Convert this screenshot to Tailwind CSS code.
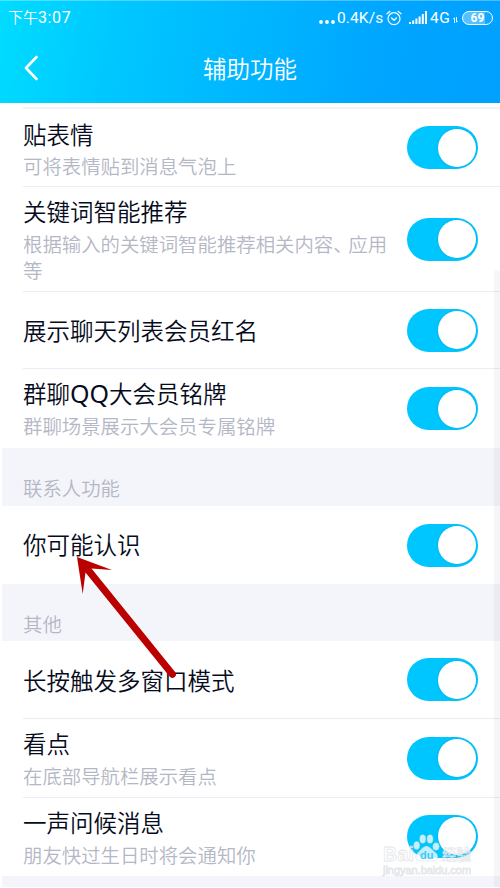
<!DOCTYPE html>
<html lang="zh-CN">
<head>
<meta charset="utf-8">
<title>辅助功能</title>
<script src="https://cdn.jsdelivr.net/npm/@tailwindcss/browser@4"></script>
</head>
<body class="bg-white">
<div class="relative flex h-[888px] w-[500px] flex-col overflow-hidden bg-white font-['Noto_Sans_CJK_SC',sans-serif] font-[350] text-[#060b20]">
  <header class="h-[103px] shrink-0 border-t border-white/30 bg-linear-[100deg,#00dcff_0%,#00c6ff_25%,#00b6ff_50%,#00a6ff_75%,#00a0ff_100%] text-white">
    <div class="flex h-[33px] items-center justify-between pr-[7px] pl-2 text-[15px] leading-5">
      <span class="whitespace-nowrap">下午<span class="font-['Roboto',sans-serif] text-[16px] font-normal tracking-[0.6px]">3:07</span></span>
      <div class="flex items-center font-['Roboto',sans-serif] font-normal">
        <svg class="mt-[8px] mr-[2px]" width="16" height="4" fill="#fff"><circle cx="2" cy="2" r="1.9"/><circle cx="8" cy="2" r="1.9"/><circle cx="14" cy="2" r="1.9"/></svg>
        <span class="w-[46px] text-[15.5px] tracking-[0.1px] whitespace-nowrap">0.4K/s</span>
        <svg class="ml-[3px]" width="16" height="16" viewBox="0 0 16 16" fill="none" stroke="#fff" stroke-width="1.2" stroke-linecap="round" stroke-linejoin="round"><circle cx="8" cy="8.700" r="6"/><path d="M1 3.800L4 1.300M15 3.800L12 1.300M5.600 8L8 10.300L10.500 8"/></svg>
        <svg class="ml-[7px]" width="18" height="13" viewBox="0 0 18 13" fill="#fff"><path d="M0 11h2v2H0zM3.200 9.500h2V13h-2zM6.400 7.500h2V13h-2zM9.600 5.500h2V13h-2zM12.800 3h2v10h-2zM16 0h2v13h-2z"/></svg>
        <span class="ml-[3px] w-[22px] text-[15.5px] tracking-[0.5px] whitespace-nowrap">4G</span>
        <svg class="mt-[5px] ml-px" width="5" height="6" viewBox="0 0 5 6" fill="none" stroke="#fff" stroke-width=".9"><path d="M1.500 6V.8L.2 2.200M3.500 0v5.200L4.800 3.800"/></svg>
        <div class="ml-[4px] flex h-[14px] w-[31px] items-center justify-center rounded-full border-[1.5px] border-white bg-linear-[90deg,#ffffff55_75%,#ffffff11_75%] text-[12px] leading-none font-bold">69</div>
      </div>
    </div>
    <div class="flex h-[67px] items-center pl-[24px]">
      <svg width="14" height="26" viewBox="0 0 14 26" fill="none" stroke="#fff" stroke-width="2.600" stroke-linecap="round" stroke-linejoin="round"><path d="M12.500 2L2 13L12.500 24"/></svg>
      <h1 class="ml-[165px] text-[23.5px] leading-[34px] whitespace-nowrap">辅助功能</h1>
    </div>
  </header>

  <main class="flex shrink-0 flex-col pt-[4px]">
    <section class="ml-[23px] flex h-[79px] shrink-0 items-center border-t-2 border-[#f3f3f9] pr-[22px]">
      <div class="w-[384px]"><h2 class="text-[23.5px] leading-[34px]">贴表情</h2><p class="mt-[2px] text-[19.4px] leading-[26px] text-[#b4b7c5]">可将表情贴到消息气泡上</p></div>
      <div class="flex h-[43px] w-[71px] shrink-0 items-center justify-end rounded-full bg-[#00c6ff] pr-[2.5px]"><span class="size-[38px] rounded-full bg-white shadow-[0_0_3px_#0060a044]"></span></div>
    </section>
    <section class="ml-[23px] flex h-[105px] shrink-0 items-center border-t border-[#ebecf3] pr-[22px]">
      <div class="w-[384px]"><h2 class="-mt-px text-[23.5px] leading-[34px]">关键词智能推荐</h2><p class="mt-[3px] w-[370px] text-[19.4px] leading-[26px] text-[#b4b7c5]">根据输入的关键词智能推荐相关内容<span class="inline-block w-[15px]">、</span>应用等</p></div>
      <div class="flex h-[43px] w-[71px] shrink-0 items-center justify-end rounded-full bg-[#00c6ff] pr-[2.5px]"><span class="size-[38px] rounded-full bg-white shadow-[0_0_3px_#0060a044]"></span></div>
    </section>
    <section class="ml-[23px] flex h-[77px] shrink-0 items-center border-t border-[#ebecf3] pr-[22px]">
      <h2 class="w-[384px] text-[23.5px] leading-[34px]">展示聊天列表会员红名</h2>
      <div class="flex h-[43px] w-[71px] shrink-0 items-center justify-end rounded-full bg-[#00c6ff] pr-[2.5px]"><span class="size-[38px] rounded-full bg-white shadow-[0_0_3px_#0060a044]"></span></div>
    </section>
    <section class="ml-[23px] flex h-[80px] shrink-0 items-center border-t border-[#ebecf3] pr-[22px]">
      <div class="mb-[2px] w-[384px]"><h2 class="h-[34px] text-[23.5px] leading-[34px]">群聊<span class="font-['Noto_Sans',sans-serif] text-[25px] leading-none font-normal">QQ</span>大会员铭牌</h2><p class="mt-[3px] text-[19.4px] leading-[26px] text-[#b4b7c5]">群聊场景展示大会员专属铭牌</p></div>
      <div class="flex h-[43px] w-[71px] shrink-0 items-center justify-end rounded-full bg-[#00c6ff] pr-[2.5px]"><span class="size-[38px] rounded-full bg-white shadow-[0_0_3px_#0060a044]"></span></div>
    </section>
    <h3 class="ml-[2px] h-[58px] shrink-0 bg-[#f4f5fa] pt-[27px] pl-[21px] text-[19.4px] leading-[26px] text-[#b4b7c5]">联系人功能</h3>
    <section class="ml-[23px] flex h-[78px] shrink-0 items-center pr-[22px]">
      <h2 class="mb-[2px] w-[384px] text-[23.5px] leading-[34px]">你可能认识</h2>
      <div class="flex h-[43px] w-[71px] shrink-0 items-center justify-end rounded-full bg-[#00c6ff] pr-[2.5px]"><span class="size-[38px] rounded-full bg-white shadow-[0_0_3px_#0060a044]"></span></div>
    </section>
    <h3 class="ml-[2px] h-[57px] shrink-0 bg-[#f4f5fa] pt-[27px] pl-[21px] text-[19.4px] leading-[26px] text-[#b4b7c5]">其他</h3>
    <section class="ml-[23px] flex h-[77px] shrink-0 items-center pr-[22px]">
      <h2 class="w-[384px] text-[23.5px] leading-[34px]">长按触发多窗口模式</h2>
      <div class="flex h-[43px] w-[71px] shrink-0 items-center justify-end rounded-full bg-[#00c6ff] pr-[2.5px]"><span class="size-[38px] rounded-full bg-white shadow-[0_0_3px_#0060a044]"></span></div>
    </section>
    <section class="ml-[23px] flex h-[79px] shrink-0 items-center border-t border-[#ebecf3] pr-[22px]">
      <div class="mb-[2px] w-[384px]"><h2 class="text-[23.5px] leading-[34px]">看点</h2><p class="mt-[3px] text-[19.4px] leading-[26px] text-[#b4b7c5]">在底部导航栏展示看点</p></div>
      <div class="flex h-[43px] w-[71px] shrink-0 items-center justify-end rounded-full bg-[#00c6ff] pr-[2.5px]"><span class="size-[38px] rounded-full bg-white shadow-[0_0_3px_#0060a044]"></span></div>
    </section>
    <section class="ml-[23px] flex h-[79px] shrink-0 items-center border-t border-[#ebecf3] pr-[22px] pb-[2px]">
      <div class="w-[384px]"><h2 class="text-[23.5px] leading-[34px]">一声问候消息</h2><p class="mt-[3px] text-[19.4px] leading-[26px] text-[#b4b7c5]">朋友快过生日时将会通知你</p></div>
      <div class="flex h-[43px] w-[71px] shrink-0 items-center justify-end rounded-full bg-[#00c6ff] pr-[2.5px]"><span class="size-[38px] rounded-full bg-white shadow-[0_0_3px_#0060a044]"></span></div>
    </section>
    <div class="ml-[2px] h-[11px] shrink-0 bg-[#f4f5fa]"></div>
  </main>

  <!-- scrollbar -->
  <div class="absolute top-[270px] right-0 h-[617px] w-[6px] rounded-t-sm bg-black/[0.035]"></div>

  <!-- pointer arrow -->
  <svg class="absolute top-[540px] left-[60px]" width="140" height="150" viewBox="0 0 140 150"><path d="M17 17L52 30L31.500 28.500L115.500 132.500A3.600 3.600 0 0 1 110 137L25.500 32.500L22.700 54Z" fill="#bb0000"/></svg>

  <!-- watermark -->
  <svg class="absolute top-[830px] left-[378px]" width="122" height="50" viewBox="0 0 122 50" font-family="Liberation Sans, Noto Sans CJK SC, sans-serif">
    <g fill="#fff" fill-opacity=".75" stroke="#c8ccd2" stroke-opacity=".5" stroke-width=".8">
      <text x="5" y="31" font-size="19.500" font-weight="bold" textLength="31">Bai</text>
      <ellipse cx="38.700" cy="15.500" rx="3" ry="4"/><ellipse cx="44.700" cy="9" rx="3" ry="4.200"/><ellipse cx="52" cy="9" rx="3" ry="4.200"/><ellipse cx="58" cy="16.500" rx="3.200" ry="3.800"/>
      <path d="M48.500 16C44 17 42 21 39.500 23C36 27 38 31 43 31H55C60 31 61 26 58 23C55 21 53 17 48.500 16Z"/>
      <text x="64" y="30" font-size="14.500" font-weight="bold" textLength="29">经验</text>
      <text x="5" y="44" font-size="10.500" textLength="88" lengthAdjust="spacingAndGlyphs">jingyan.baidu.com</text>
    </g>
    <text x="42" y="28.500" font-size="11" font-weight="bold" fill="#40c9f7">du</text>
  </svg>
</div>
</body>
</html>
